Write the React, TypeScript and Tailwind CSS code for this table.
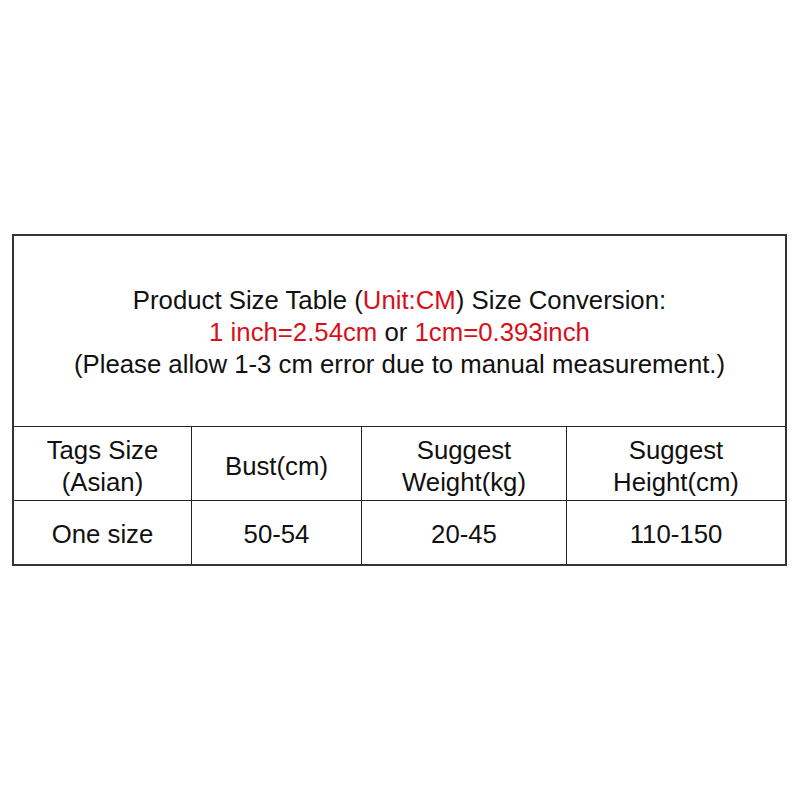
import React from "react";

export default function App() {
  const f = { fontFamily: '"Liberation Sans", Arial, sans-serif' };
  return (
    <div className="w-[800px] h-[800px] bg-white text-[#111]" style={f}>
      <div className="pt-[234px] pl-[12px]">
        <div className="w-[775px] border-2 border-[#333] text-[25.75px] leading-[32px] text-center">
          <div className="h-[191px] pt-[2px] flex flex-col items-center justify-center border-b border-[#222]">
            <div>
              Product Size Table (<span className="text-[#d8101a]">Unit:CM</span>) Size Conversion:
            </div>
            <div>
              <span className="text-[#d8101a]">1 inch=2.54cm</span> or{" "}
              <span className="text-[#d8101a]">1cm=0.393inch</span>
            </div>
            <div>(Please allow 1-3 cm error due to manual measurement.)</div>
          </div>
          <div className="grid grid-cols-[178px_170px_205px_1fr]">
            <div className="h-[74px] pt-[5px] flex flex-col items-center justify-center border-r border-b border-[#222]">
              <div>Tags Size</div>
              <div>(Asian)</div>
            </div>
            <div className="h-[74px] pt-[5px] flex items-center justify-center border-r border-b border-[#222]">
              Bust(cm)
            </div>
            <div className="h-[74px] pt-[5px] flex flex-col items-center justify-center border-r border-b border-[#222]">
              <div>Suggest</div>
              <div>Weight(kg)</div>
            </div>
            <div className="h-[74px] pt-[5px] flex flex-col items-center justify-center border-b border-[#222]">
              <div>Suggest</div>
              <div>Height(cm)</div>
            </div>
            <div className="h-[63px] pt-[2px] flex items-center justify-center border-r border-[#222]">One size</div>
            <div className="h-[63px] pt-[2px] flex items-center justify-center border-r border-[#222]">50-54</div>
            <div className="h-[63px] pt-[2px] flex items-center justify-center border-r border-[#222]">20-45</div>
            <div className="h-[63px] pt-[2px] flex items-center justify-center">110-150</div>
          </div>
        </div>
      </div>
    </div>
  );
}
